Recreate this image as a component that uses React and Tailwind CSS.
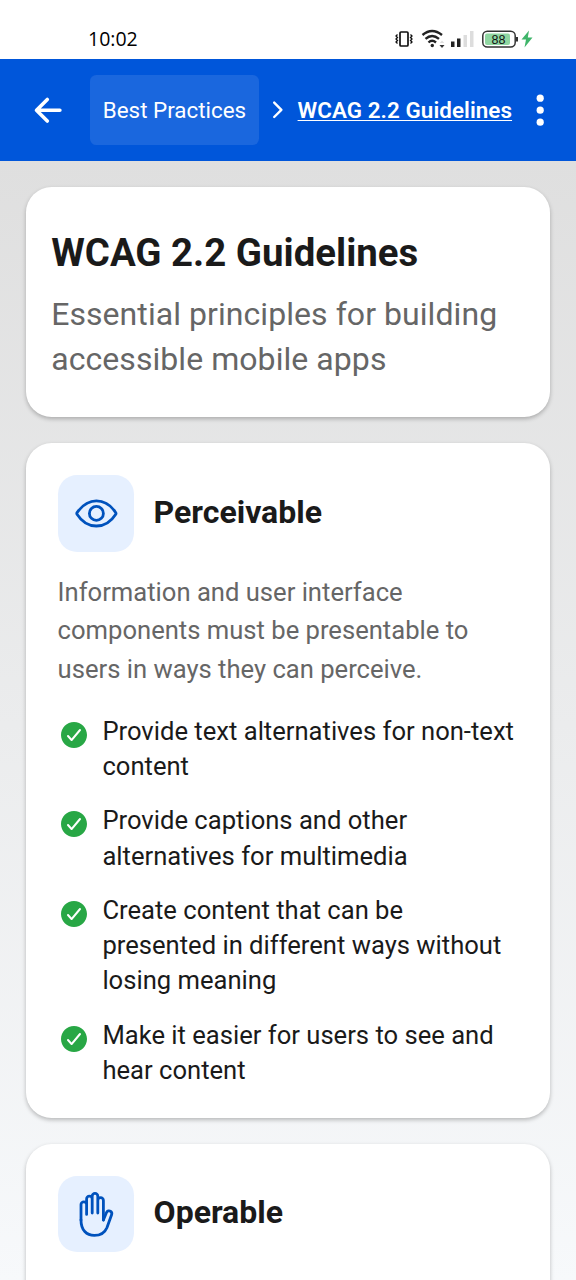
import React from "react";
import {
  IoArrowBack,
  IoCheckmarkCircle,
  IoChevronForward,
  IoEllipsisVertical,
  IoEyeOutline,
  IoHandLeftOutline,
} from "react-icons/io5";

function StatusBar() {
  return (
    <div className="flex h-[59px] shrink-0 items-center justify-between bg-white pt-[18px] pr-[42px] pl-[88px]">
      <span className="font-['Open_Sans',sans-serif] text-[19.5px] leading-6 font-medium text-black">10:02</span>
      <svg width="139" height="24" viewBox="395 26.500 139 24" fill="none">
        <rect x="400" y="31.500" width="8" height="14" rx="1" stroke="#111" strokeWidth="1.700" />
        <path d="M397.500 34l-1.500 1.500 1.500 1.500-1.500 1.500 1.500 1.500-1.500 1.500 1.500 1.500M410.500 34l1.500 1.500-1.500 1.500 1.500 1.500-1.500 1.500 1.500 1.500-1.500 1.500" stroke="#111" strokeWidth="1.300" />
        <path d="M422.500 34.500Q432 26.500 442 34.500M425.500 38.400Q432 32.700 439 38.400M428.500 42Q432 38.700 436 42" stroke="#222" strokeWidth="2.400" />
        <circle cx="432.300" cy="45" r="1.700" fill="#222" />
        <path d="M439.500 44.500h5l-2.500 3z" fill="#333" />
        <path d="M439.800 42.500h4.400l-2.200-2.500z" fill="#ddd" />
        <path d="M451 41h3.500v5.500H451zM457 38h3.500v8.500H457z" fill="#222" />
        <path d="M463.500 34.500h3.500v12h-3.500zM470 30.500h3.500v16H470z" fill="#ddd" />
        <rect x="482.800" y="30.800" width="32.400" height="15.800" rx="4.500" stroke="#333" strokeWidth="1.500" />
        <rect x="485" y="33" width="25" height="11.500" rx="2" fill="#8fd6a1" />
        <path d="M517 36.500v4.500" stroke="#333" strokeWidth="2" />
        <text x="498.500" y="43.300" textAnchor="middle" fontFamily="Liberation Sans, sans-serif" fontSize="12.500" fill="#111">88</text>
        <path d="M529 30l-7.500 9h4.500l-1.500 8 8-10h-4.700z" fill="#3fb56a" />
      </svg>
    </div>
  );
}

function Header() {
  return (
    <header className="flex h-[102px] shrink-0 items-center bg-[#0056da] text-white">
      <IoArrowBack className="ml-[28.6px] size-[38.4px]" />
      <div className="ml-[23px] flex h-[70px] w-[169px] items-center justify-center rounded-[6.4px] bg-[#1a67de] pt-[2px] text-[22.4px] whitespace-nowrap">
        Best Practices
      </div>
      <IoChevronForward className="ml-[6.5px] size-[25.6px]" />
      <span className="ml-[6.5px] w-[214px] pt-[2px] text-[22.4px] font-semibold tracking-[0.06px] whitespace-nowrap underline decoration-[1.3px] underline-offset-[2px]">
        WCAG 2.2 Guidelines
      </span>
      <IoEllipsisVertical className="ml-[9.5px] size-[38.4px]" />
    </header>
  );
}

const cardClass = "rounded-[25.6px] bg-white shadow-[0_2px_4px_rgba(0,0,0,0.25)]";

function SectionTitle({ icon: Icon, children }) {
  return (
    <div className="flex items-center">
      <div className="flex size-[76.8px] items-center justify-center rounded-[19.2px] bg-[#e6f0ff]">
        <Icon className="size-[44.8px] overflow-visible text-[#0052bd]" />
      </div>
      <h2 className="ml-[19.2px] pb-[3px] text-[32px] leading-[38px] font-bold whitespace-nowrap">{children}</h2>
    </div>
  );
}

const perceivable = [
  ["Provide text alternatives for non-text", "content"],
  ["Provide captions and other", "alternatives for multimedia"],
  ["Create content that can be", "presented in different ways without", "losing meaning"],
  ["Make it easier for users to see and", "hear content"],
];

function Lines({ lines }) {
  return lines.map((line) => (
    <span key={line} className="block whitespace-nowrap">
      {line}
    </span>
  ));
}

export default function App() {
  return (
    <div className="flex h-[1280px] w-[576px] flex-col overflow-hidden font-[Roboto,sans-serif] text-[#1a1a1a]">
      <StatusBar />
      <Header />
      <main className="flex min-h-0 grow flex-col gap-[25.6px] bg-linear-to-b from-[#dfdfdf] to-[#f7f9fb] px-[25.6px] pt-[25.8px]">
        <section className={`${cardClass} h-[230.4px] shrink-0 px-[25.6px] pt-[43px]`}>
          <h1 className="text-[38.4px] leading-[46px] font-bold whitespace-nowrap">WCAG 2.2 Guidelines</h1>
          <p className="mt-[16px] text-[32px] leading-[44.8px] tracking-[0.06px] text-[#666]">
            <Lines lines={["Essential principles for building", "accessible mobile apps"]} />
          </p>
        </section>
        <section className={`${cardClass} h-[675.2px] shrink-0 p-[32px]`}>
          <SectionTitle icon={IoEyeOutline}>Perceivable</SectionTitle>
          <p className="mt-[21.2px] text-[25.6px] leading-[38.4px] text-[#666]">
            <Lines
              lines={[
                "Information and user interface",
                "components must be presentable to",
                "users in ways they can perceive.",
              ]}
            />
          </p>
          <ul className="mt-[25.8px] flex flex-col gap-[19.2px]">
            {perceivable.map((lines) => (
              <li key={lines[0]} className="flex items-start gap-[12.8px]">
                <IoCheckmarkCircle className="mt-[4.8px] size-[32px] shrink-0 text-[#28a745]" />
                <div className="text-[25.6px] leading-[35.2px]">
                  <Lines lines={lines} />
                </div>
              </li>
            ))}
          </ul>
        </section>
        <section className={`${cardClass} h-[400px] shrink-0 p-[32px]`}>
          <SectionTitle icon={IoHandLeftOutline}>Operable</SectionTitle>
        </section>
      </main>
    </div>
  );
}
